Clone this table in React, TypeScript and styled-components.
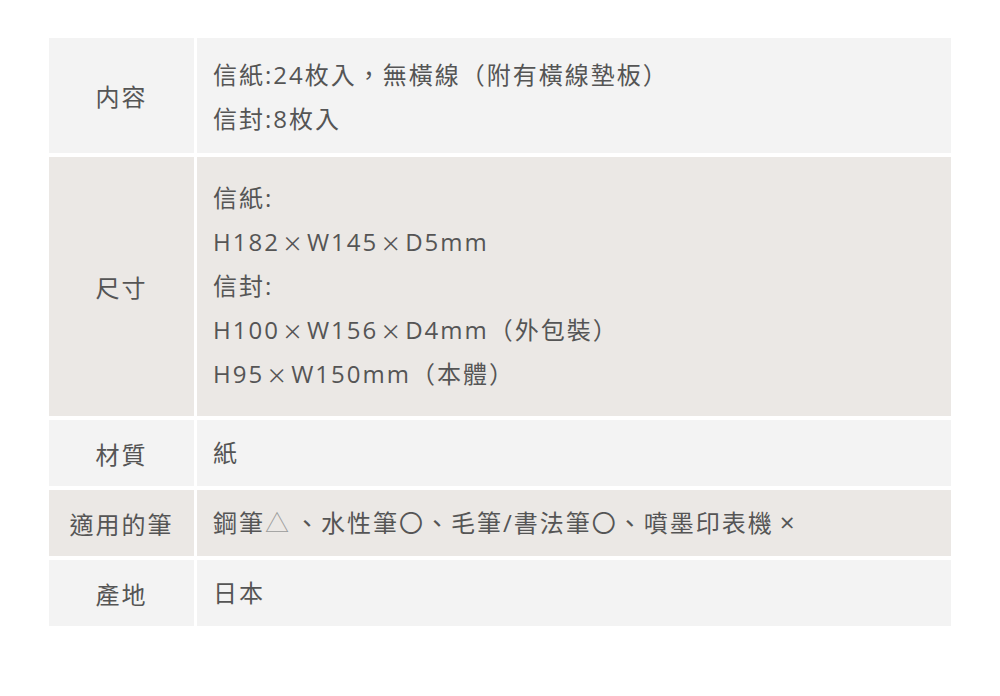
import React from 'react';
import styled, { createGlobalStyle } from 'styled-components';

const GlobalStyle = createGlobalStyle`
  body {
    margin: 0;
    background: #fff;
    font-family: "Open Sans", "Noto Sans CJK TC", sans-serif;
  }
`

type Tone = 'light' | 'warm'

const Table = styled.div`
  width: 902px;
  margin: 38px auto 0;
  display: flex;
  flex-direction: column;
  gap: 4px;
`

const Row = styled.div`
  display: grid;
  grid-template-columns: 145px 1fr;
  column-gap: 3px;
`

const Label = styled.div<{ $tone: Tone }>`
  background: ${p => (p.$tone === 'warm' ? '#ebe8e5' : '#f3f3f3')};
  color: #555;
  font-size: 24px;
  letter-spacing: 2px;
  display: flex;
  align-items: center;
  justify-content: center;
`

const Content = styled.div<{ $tone: Tone; $padTop: number; $padBottom: number }>`
  background: ${p => (p.$tone === 'warm' ? '#ebe8e5' : '#f3f3f3')};
  color: #555;
  font-size: 24px;
  letter-spacing: 2px;
  line-height: 44px;
  padding: ${p => p.$padTop}px 16px ${p => p.$padBottom}px 16px;
`

const Line = styled.div`
  white-space: nowrap;
`

const Times = styled.span`
  font-family: "Noto Sans CJK TC", sans-serif;
  font-size: 21px;
  line-height: 1;
  margin: 0 2px;
`

const Triangle = styled.span`
  color: #9a9a9a;
  font-weight: 300;
  line-height: 1;
  margin-right: 4px;
`

const Circle = styled.span`
  font-family: "Noto Sans CJK TC", sans-serif;
  line-height: 1;
`

const Cross = styled.span`
  margin-left: 6px;
  font-size: 26px;
  line-height: 1;
`

interface SpecRow {
  label: string
  lines: React.ReactNode[]
  tone: Tone
  padTop: number
  padBottom: number
}

const getRows = (): SpecRow[] => [
  {
    label: '内容',
    tone: 'light',
    padTop: 15,
    padBottom: 12,
    lines: ['信紙:24枚入，無橫線（附有橫線墊板）', '信封:8枚入'],
  },
  {
    label: '尺寸',
    tone: 'warm',
    padTop: 19,
    padBottom: 20,
    lines: [
      '信紙:',
      <>H182<Times>×</Times>W145<Times>×</Times>D5mm</>,
      '信封:',
      <>H100<Times>×</Times>W156<Times>×</Times>D4mm（外包裝）</>,
      <>H95<Times>×</Times>W150mm（本體）</>,
    ],
  },
  { label: '材質', tone: 'light', padTop: 11, padBottom: 11, lines: ['紙'] },
  {
    label: '適用的筆',
    tone: 'warm',
    padTop: 11,
    padBottom: 11,
    lines: [
      <>鋼筆<Triangle>△</Triangle>、水性筆<Circle>〇</Circle>、毛筆/書法筆<Circle>〇</Circle>、噴墨印表機<Cross>×</Cross></>,
    ],
  },
  { label: '產地', tone: 'light', padTop: 11, padBottom: 11, lines: ['日本'] },
]

export default function App() {
  const rows = getRows()
  return (
    <>
      <GlobalStyle />
      <Table>
        {rows.map(row => (
          <Row key={row.label}>
            <Label $tone={row.tone}>{row.label}</Label>
            <Content $tone={row.tone} $padTop={row.padTop} $padBottom={row.padBottom}>
              {row.lines.map((line, i) => <Line key={i}>{line}</Line>)}
            </Content>
          </Row>
        ))}
      </Table>
    </>
  )
}
